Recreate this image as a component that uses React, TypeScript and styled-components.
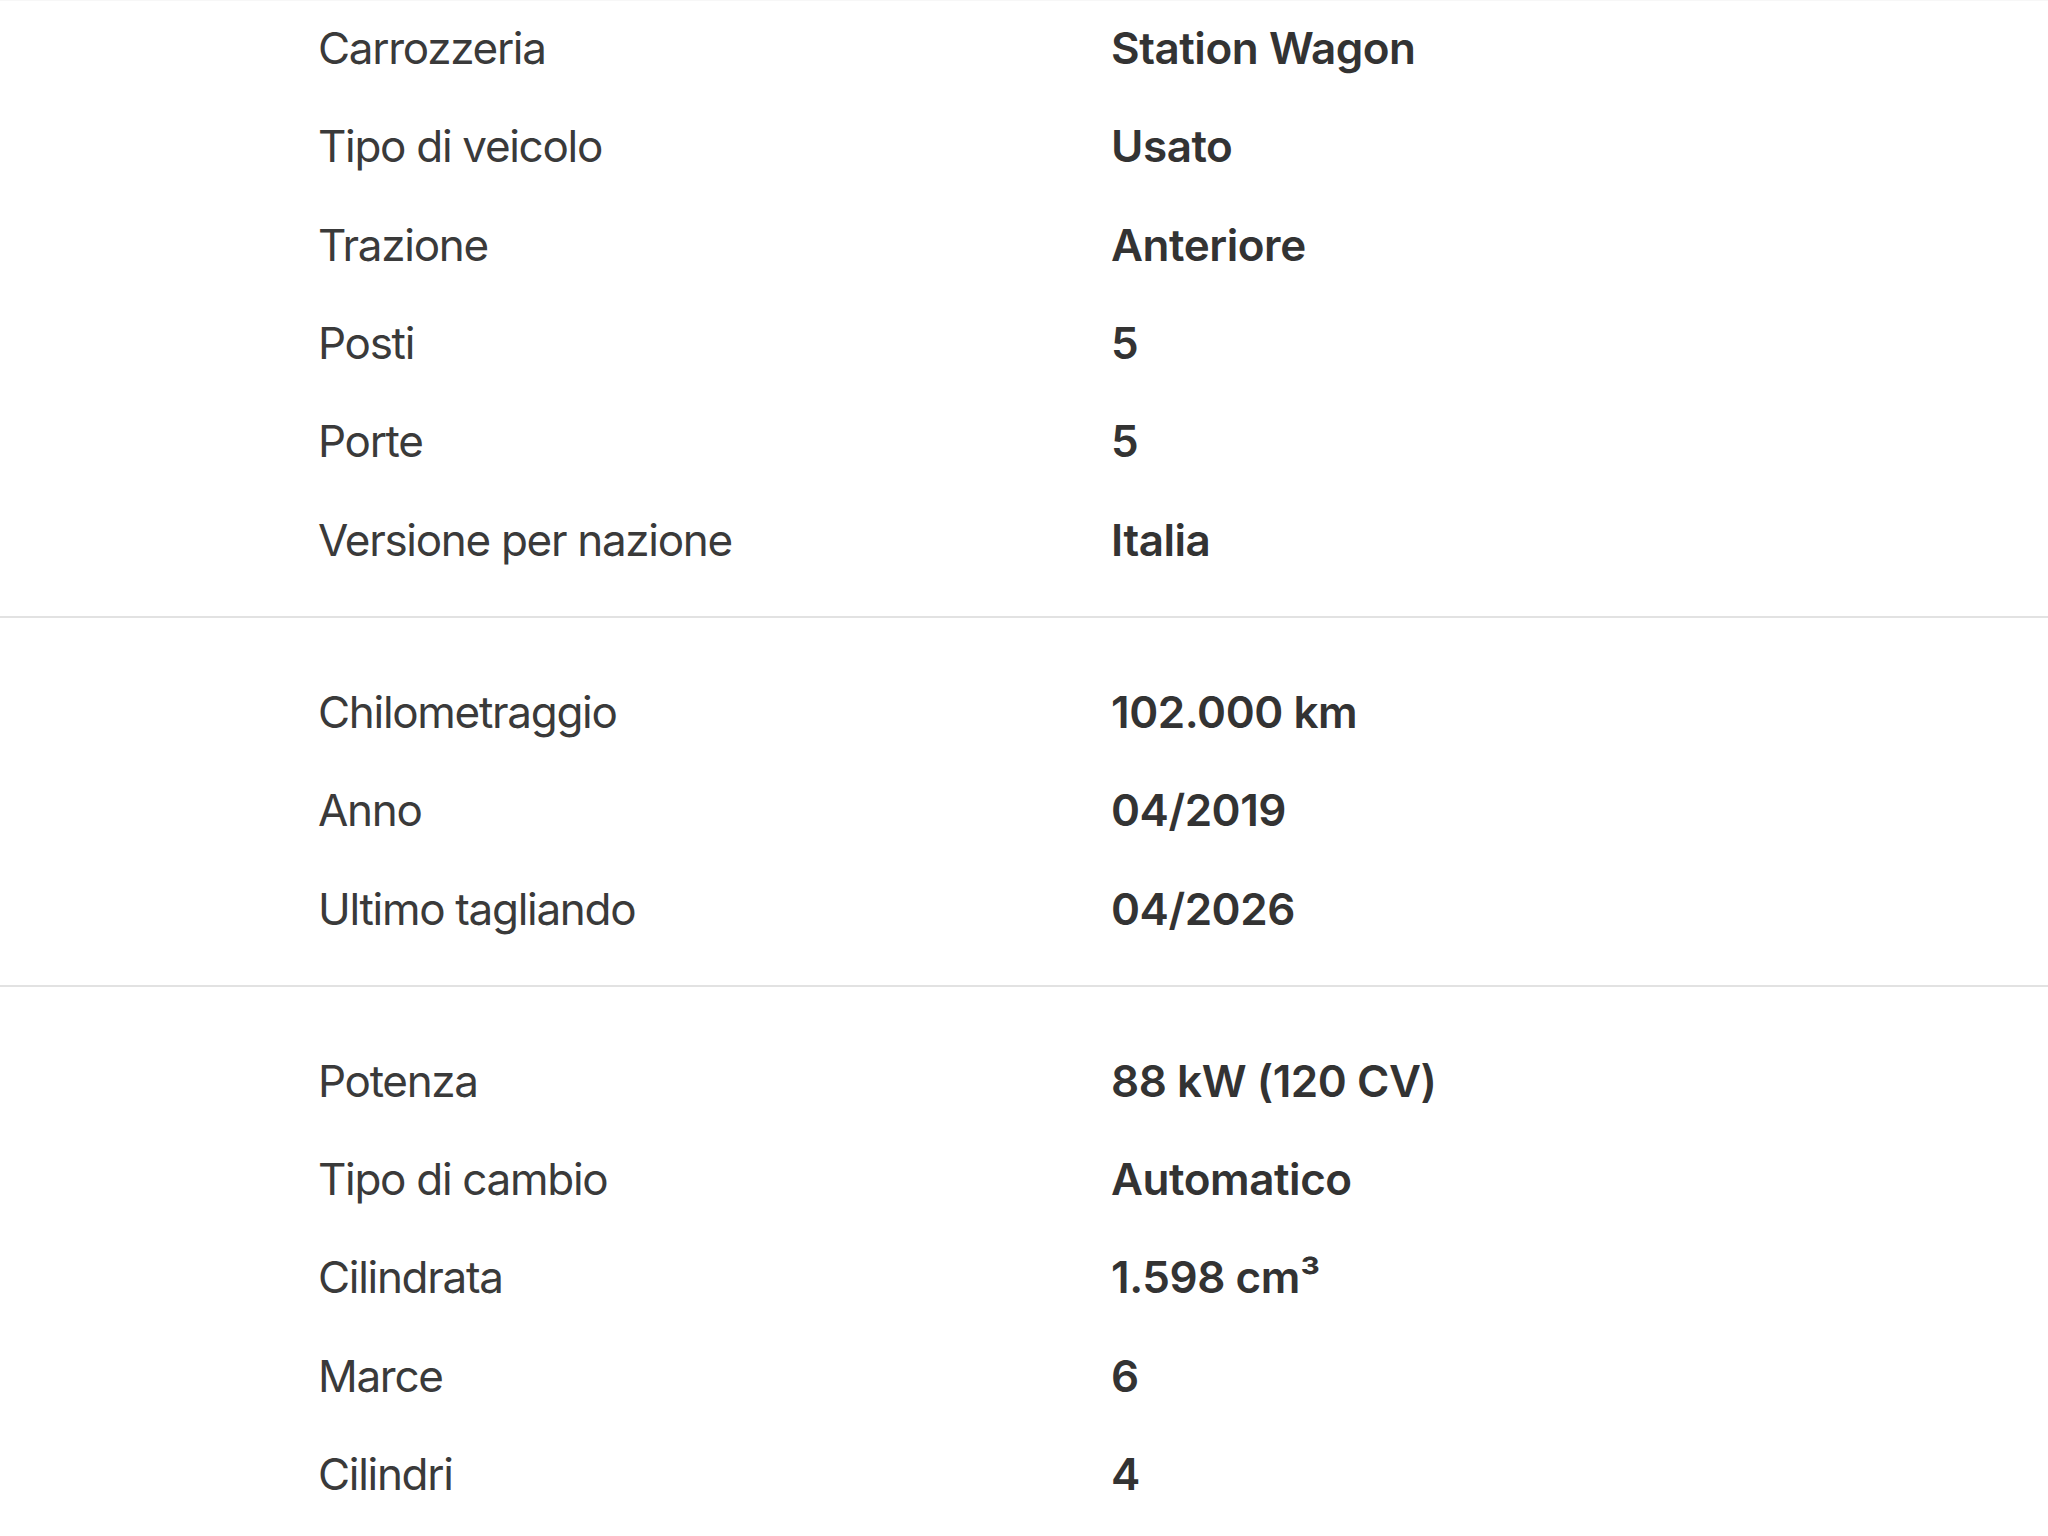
import React from "react";
import styled, { createGlobalStyle } from "styled-components";

const GlobalStyle = createGlobalStyle`
  html, body {
    margin: 0;
    padding: 0;
    background: #ffffff;
  }
  body {
    font-family: Inter, "Noto Sans", "Liberation Sans", sans-serif;
    -webkit-font-smoothing: antialiased;
  }
`;

const Page = styled.div`
  width: 2048px;
  min-height: 1536px;
  background: #ffffff;
  overflow: hidden;
  position: relative;
  &::before {
    content: "";
    position: absolute;
    top: 0;
    left: 0;
    right: 0;
    height: 1px;
    background: #f7f7f7;
  }
`;

const Section = styled.section<{ $first?: boolean }>`
  display: flex;
  flex-direction: column;
  margin-top: ${(p) => (p.$first ? "-1px" : "0")};
  padding: ${(p) => (p.$first ? "0" : "45px")} 0 27px;
  & + & {
    border-top: 2px solid #e2e2e2;
  }
`;

const Row = styled.div`
  display: grid;
  grid-template-columns: 793px 1fr;
  align-items: center;
  height: 98.3px;
  padding-left: 318px;
`;

const Label = styled.span`
  font-size: 44px;
  font-weight: 400;
  color: #3a3a3a;
  letter-spacing: -1.3px;
  white-space: nowrap;
`;

const Value = styled.span`
  font-size: 44px;
  font-weight: 600;
  color: #333333;
  letter-spacing: -0.45px;
  white-space: nowrap;
`;

type Item = [string, string];

const sections: Item[][] = [
  [
    ["Carrozzeria", "Station Wagon"],
    ["Tipo di veicolo", "Usato"],
    ["Trazione", "Anteriore"],
    ["Posti", "5"],
    ["Porte", "5"],
    ["Versione per nazione", "Italia"],
  ],
  [
    ["Chilometraggio", "102.000 km"],
    ["Anno", "04/2019"],
    ["Ultimo tagliando", "04/2026"],
  ],
  [
    ["Potenza", "88 kW (120 CV)"],
    ["Tipo di cambio", "Automatico"],
    ["Cilindrata", "1.598 cm³"],
    ["Marce", "6"],
    ["Cilindri", "4"],
  ],
];

export default function App() {
  return (
    <>
      <GlobalStyle />
      <Page>
        {sections.map((items, i) => (
          <Section key={i} $first={i === 0}>
            {items.map(([label, value]) => (
              <Row key={label}>
                <Label>{label}</Label>
                <Value>{value}</Value>
              </Row>
            ))}
          </Section>
        ))}
      </Page>
    </>
  );
}
